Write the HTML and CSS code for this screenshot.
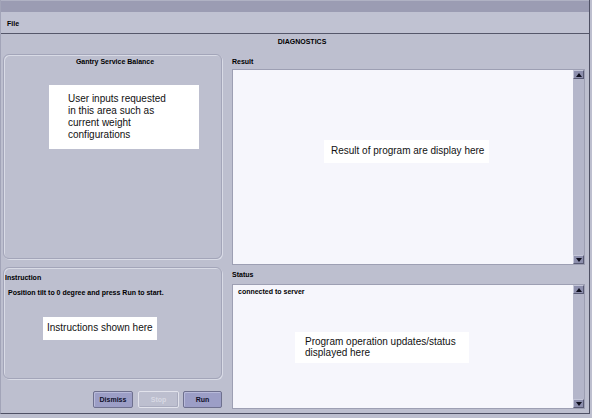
FILE: index.html
```html
<!DOCTYPE html>
<html>
<head>
<meta charset="utf-8">
<link rel="stylesheet" href="styles.css">
</head>
<body>
<div class="window">
  <div class="titlebar"></div>
  <div class="menubar"><span class="menu-item">File</span></div>
  <div class="heading">DIAGNOSTICS</div>
  <div class="main">
    <div class="left">
      <div class="panel gantry">
        <div class="panel-title center">Gantry Service Balance</div>
        <div class="note note-inputs">User inputs requested<br>in this area such as<br>current weight<br>configurations</div>
      </div>
      <div class="panel instruction">
        <div class="panel-title">Instruction</div>
        <div class="instr-text">Position tilt to 0 degree and press Run to start.</div>
        <div class="note note-instr">Instructions shown here</div>
      </div>
      <div class="buttons">
        <button class="btn btn-dismiss">Dismiss</button>
        <button class="btn btn-stop" disabled>Stop</button>
        <button class="btn btn-run">Run</button>
      </div>
    </div>
    <div class="right">
      <div class="label label-result">Result</div>
      <div class="pane pane-result">
        <div class="pane-body">
          <div class="note note-result">Result of program are display here</div>
        </div>
        <div class="scrollbar">
          <div class="sb-btn"><span class="tri-up"></span></div>
          <div class="sb-track"></div>
          <div class="sb-btn"><span class="tri-down"></span></div>
        </div>
      </div>
      <div class="label label-status">Status</div>
      <div class="pane pane-status">
        <div class="pane-body">
          <div class="status-line">connected to server</div>
          <div class="note note-status">Program operation updates/status<br>displayed here</div>
        </div>
        <div class="scrollbar">
          <div class="sb-btn"><span class="tri-up"></span></div>
          <div class="sb-track"></div>
          <div class="sb-btn"><span class="tri-down"></span></div>
        </div>
      </div>
    </div>
  </div>
</div>
</body>
</html>
```

FILE: styles.css
```css
html, body {
  margin: 0;
  padding: 0;
  background: #bdbfcf;
  font-family: "Liberation Sans", Arial, sans-serif;
  color: #000;
}

.window {
  box-sizing: border-box;
  width: 590px;
  height: 414px;
  border-left: 1px solid #a2a4b8;
  border-right: 1px solid #4e5064;
  border-bottom: 1px solid #4e5064;
  background: #bdbfcf;
  display: flex;
  flex-direction: column;
}

.titlebar {
  height: 12px;
  background: #9b9cb3;
  border-top: 1px solid #b0b2c4;
  box-sizing: border-box;
}

.menubar {
  height: 22px;
  box-sizing: border-box;
  border-bottom: 1px solid #55576a;
  display: flex;
  align-items: center;
  padding-left: 6px;
  padding-top: 1px;
  background: #c0c2d2;
}

.menu-item {
  font-size: 7px;
  font-weight: bold;
}

.heading {
  height: 16px;
  line-height: 16px;
  font-size: 7px;
  font-weight: bold;
  text-align: center;
  padding-left: 14px;
}

.main {
  display: flex;
  padding-left: 2px;
}

.left {
  width: 219px;
  padding-top: 4px;
  display: flex;
  flex-direction: column;
}

.panel {
  box-sizing: border-box;
  border: 1px solid #a3a5b9;
  border-radius: 6px;
  box-shadow: inset 1px 1px 0 #d9dbe6, 1px 1px 0 #d9dbe6;
}

.gantry {
  height: 205px;
}

.instruction {
  height: 112px;
  margin-top: 8px;
}

.panel-title {
  font-size: 7px;
  font-weight: bold;
  line-height: 10px;
}

.gantry .panel-title {
  padding-top: 2px;
  text-align: center;
  padding-left: 5px;
}

.instruction .panel-title {
  padding-top: 5px;
  padding-left: 1px;
}

.note {
  background: #fff;
  font-size: 10px;
  color: #111;
}

.note-inputs {
  width: 150px;
  height: 64px;
  box-sizing: border-box;
  margin: 18px 0 0 45px;
  padding: 8px 0 0 19px;
  line-height: 12px;
}

.instr-text {
  font-size: 7px;
  font-weight: bold;
  line-height: 10px;
  margin-top: 5px;
  padding-left: 4px;
}

.note-instr {
  width: 114px;
  height: 23px;
  box-sizing: border-box;
  margin: 19px 0 0 39px;
  padding: 5px 0 0 4px;
  line-height: 12px;
}

.buttons {
  display: flex;
  justify-content: flex-end;
  margin-top: 12px;
}

.btn {
  height: 17px;
  box-sizing: border-box;
  font-family: "Liberation Sans", Arial, sans-serif;
  font-size: 7px;
  font-weight: bold;
  border-radius: 2px;
  padding: 0;
  margin: 0;
  color: #10102a;
  background: #9c9ec6;
  border: 1px solid #6e708e;
  box-shadow: inset 1px 1px 0 #b8bada;
}

.btn-dismiss { width: 40px; }
.btn-stop {
  width: 41px;
  margin-left: 5px;
  background: #bdbfcf;
  border: 1px solid #e2e3ec;
  box-shadow: inset -1px -1px 0 #a9abbe;
  color: #d8d9e4;
}
.btn-run { width: 39px; margin-left: 4px; }

.right {
  margin-left: 10px;
  width: 353px;
  display: flex;
  flex-direction: column;
}

.label {
  font-size: 7px;
  font-weight: bold;
  line-height: 10px;
}

.label-result {
  padding-top: 7px;
  margin-bottom: 2px;
}

.label-status {
  padding-top: 5px;
  margin-bottom: 4px;
}

.pane {
  display: flex;
  box-sizing: border-box;
  border: 1px solid #9d9fb3;
}

.pane-result { height: 196px; }
.pane-status { height: 125px; }

.pane-body {
  flex: 1;
  background: #f6f6fc;
}

.note-result {
  width: 165px;
  height: 23px;
  box-sizing: border-box;
  margin: 70px 0 0 91px;
  padding: 5px 0 0 7px;
  line-height: 12px;
}

.status-line {
  font-size: 7px;
  font-weight: bold;
  line-height: 10px;
  padding: 2px 0 0 5px;
}

.note-status {
  width: 174px;
  height: 31px;
  box-sizing: border-box;
  margin: 35px 0 0 62px;
  padding: 4px 0 0 10px;
  line-height: 11px;
}

.scrollbar {
  width: 11px;
  background: #b4b6ca;
  display: flex;
  flex-direction: column;
}

.sb-track { flex: 1; }

.sb-btn {
  height: 9px;
  box-sizing: border-box;
  background: #8d8fad;
  border-top: 1px solid #c4c6d8;
  border-left: 1px solid #c4c6d8;
  border-right: 1px solid #585a74;
  border-bottom: 1px solid #585a74;
  display: flex;
  align-items: center;
  justify-content: center;
}

.tri-up {
  width: 0;
  height: 0;
  border-left: 3px solid transparent;
  border-right: 3px solid transparent;
  border-bottom: 4px solid #0c0c1c;
}

.tri-down {
  width: 0;
  height: 0;
  border-left: 3px solid transparent;
  border-right: 3px solid transparent;
  border-top: 4px solid #0c0c1c;
}
```
